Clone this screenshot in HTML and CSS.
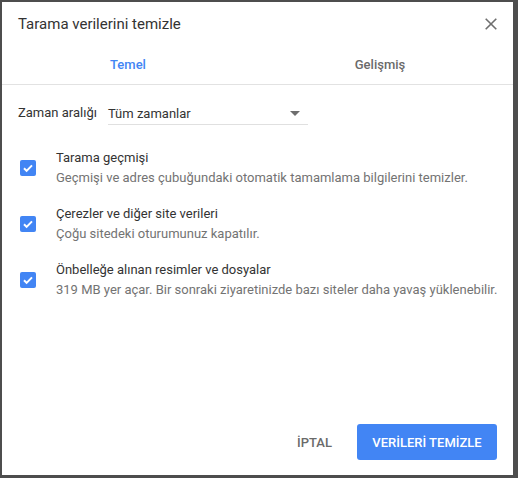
FILE: index.html
```html
<!DOCTYPE html>
<html lang="tr">
<head>
  <meta charset="UTF-8" />
  <meta name="viewport" content="width=device-width, initial-scale=1.0"/>
  <title>Tarama verilerini temizle</title>
  <link rel="stylesheet" href="styles.css">
</head>
<body>
  <div class="dialog">
    <div class="header">
      <div class="title">Tarama verilerini temizle</div>
      <button class="close" aria-label="Kapat">
        <svg width="12" height="12" viewBox="0 0 12 12">
          <path d="M0.7 0.7L11.3 11.3M11.3 0.7L0.7 11.3" stroke="#6e6e6e" stroke-width="1.6" fill="none"/>
        </svg>
      </button>
    </div>

    <div class="tabs">
      <div class="tab active">Temel</div>
      <div class="tab">Gelişmiş</div>
    </div>

    <div class="content">
      <div class="range-row">
        <div class="range-label">Zaman aralığı</div>
        <div class="select">
          <span>Tüm zamanlar</span>
          <svg class="arrow" width="10" height="5" viewBox="0 0 10 5">
            <path d="M0 0H10L5 5Z" fill="#6e6e6e"/>
          </svg>
        </div>
      </div>

      <div class="item">
        <div class="checkbox">
          <svg width="16" height="16" viewBox="0 0 16 16">
            <path d="M4 8.3l2.6 2.6L12 5.4" stroke="#fff" stroke-width="2" fill="none"/>
          </svg>
        </div>
        <div class="item-text">
          <div class="item-label">Tarama geçmişi</div>
          <div class="item-desc">Geçmişi ve adres çubuğundaki otomatik tamamlama bilgilerini temizler.</div>
        </div>
      </div>

      <div class="item">
        <div class="checkbox">
          <svg width="16" height="16" viewBox="0 0 16 16">
            <path d="M4 8.3l2.6 2.6L12 5.4" stroke="#fff" stroke-width="2" fill="none"/>
          </svg>
        </div>
        <div class="item-text">
          <div class="item-label">Çerezler ve diğer site verileri</div>
          <div class="item-desc">Çoğu sitedeki oturumunuz kapatılır.</div>
        </div>
      </div>

      <div class="item">
        <div class="checkbox">
          <svg width="16" height="16" viewBox="0 0 16 16">
            <path d="M4 8.3l2.6 2.6L12 5.4" stroke="#fff" stroke-width="2" fill="none"/>
          </svg>
        </div>
        <div class="item-text">
          <div class="item-label">Önbelleğe alınan resimler ve dosyalar</div>
          <div class="item-desc">319 MB yer açar. Bir sonraki ziyaretinizde bazı siteler daha yavaş yüklenebilir.</div>
        </div>
      </div>
    </div>

    <div class="footer">
      <button class="btn cancel">İPTAL</button>
      <button class="btn primary">VERİLERİ TEMİZLE</button>
    </div>
  </div>
</body>
</html>
```

FILE: styles.css
```css
html, body {
  margin: 0;
  height: 100%;
}

body {
  background: #4d4d4d;
  font-family: Roboto, 'Liberation Sans', sans-serif;
  color: #333;
  box-sizing: border-box;
  padding: 2px 5px 3px 2px;
}

.dialog {
  background: #fff;
  height: 100%;
  display: flex;
  flex-direction: column;
}

.header {
  display: flex;
  justify-content: space-between;
  align-items: center;
  padding: 12px 16px 10px 16px;
}

.title {
  font-size: 15px;
  line-height: 20px;
  color: #333;
}

.close {
  border: none;
  background: none;
  padding: 0;
  width: 12px;
  height: 12px;
  display: flex;
}

.tabs {
  display: flex;
  height: 40px;
  padding-right: 7px;
  border-bottom: 1px solid #e2e2e2;
}

.tab {
  flex: 1;
  display: flex;
  justify-content: center;
  align-items: center;
  font-size: 13px;
  font-weight: 500;
  color: #6a6a6a;
}

.tab.active {
  color: #4285f4;
}

.content {
  flex: 1;
  padding: 14px 12px 0 16px;
}

.range-row {
  display: flex;
  align-items: center;
  font-size: 13px;
  margin-bottom: 15px;
}

.range-label {
  margin-right: 11px;
}

.select {
  width: 200px;
  height: 25px;
  border-bottom: 1px solid #e0e0e0;
  display: flex;
  align-items: center;
  justify-content: space-between;
}

.select span {
  margin-top: 3px;
}

.arrow {
  margin-right: 8px;
  margin-top: 3px;
}

.item {
  display: flex;
  align-items: center;
  padding: 8px 0;
}

.checkbox {
  flex: none;
  width: 16px;
  height: 16px;
  border-radius: 2px;
  background: #4285f4;
  margin-left: 2px;
  margin-right: 20px;
  display: flex;
}

.item-label {
  font-size: 13px;
  line-height: 20px;
  color: #333;
}

.item-desc {
  font-size: 13px;
  line-height: 20px;
  color: #737373;
  white-space: nowrap;
}

.footer {
  display: flex;
  justify-content: flex-end;
  align-items: center;
  gap: 10px;
  padding: 0 16px 15px 16px;
}

.btn {
  font-family: Roboto, 'Liberation Sans', sans-serif;
  font-size: 13px;
  font-weight: 500;
  height: 36px;
  border: none;
  border-radius: 3px;
  padding: 0 15px;
  cursor: pointer;
}

.cancel {
  background: none;
  color: #6a6a6a;
}

.primary {
  background: #4285f4;
  color: #fff;
  width: 140px;
}
```
